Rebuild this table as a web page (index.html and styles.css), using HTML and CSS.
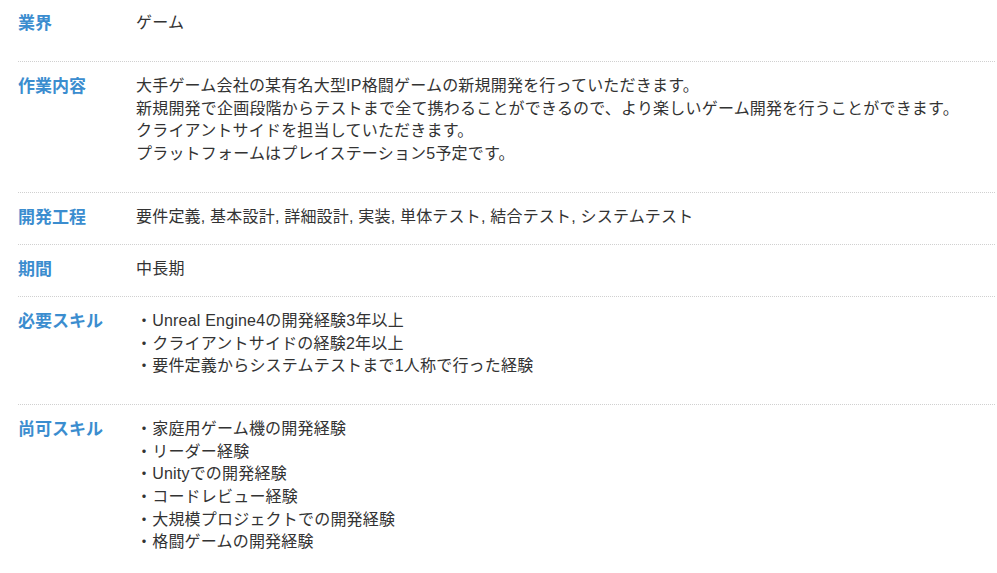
FILE: index.html
```html
<!DOCTYPE html>
<html lang="ja">
<head>
    <meta charset="UTF-8">
    <meta name="viewport" content="width=device-width, initial-scale=1.0">
    <title>案件詳細</title>
    <link rel="stylesheet" href="styles.css">
</head>
<body>
    <div class="detail">
        <div class="row row-first row-loose">
            <div class="label">業界</div>
            <div class="value">ゲーム</div>
        </div>

        <div class="row row-loose">
            <div class="label">作業内容</div>
            <div class="value">
                大手ゲーム会社の某有名大型IP格闘ゲームの新規開発を行っていただきます。<br>
                新規開発で企画段階からテストまで全て携わることができるので、より楽しいゲーム開発を行うことができます。<br>
                クライアントサイドを担当していただきます。<br>
                プラットフォームはプレイステーション5予定です。
            </div>
        </div>

        <div class="row">
            <div class="label">開発工程</div>
            <div class="value">要件定義, 基本設計, 詳細設計, 実装, 単体テスト, 結合テスト, システムテスト</div>
        </div>

        <div class="row">
            <div class="label">期間</div>
            <div class="value">中長期</div>
        </div>

        <div class="row row-loose">
            <div class="label">必要スキル</div>
            <div class="value">
                ・Unreal Engine4の開発経験3年以上<br>
                ・クライアントサイドの経験2年以上<br>
                ・要件定義からシステムテストまで1人称で行った経験
            </div>
        </div>

        <div class="row row-loose">
            <div class="label">尚可スキル</div>
            <div class="value">
                ・家庭用ゲーム機の開発経験<br>
                ・リーダー経験<br>
                ・Unityでの開発経験<br>
                ・コードレビュー経験<br>
                ・大規模プロジェクトでの開発経験<br>
                ・格闘ゲームの開発経験
            </div>
        </div>
    </div>
</body>
</html>
```

FILE: styles.css
```css
body {
    margin: 0;
    background-color: #fff;
    font-family: "Liberation Sans", "Noto Sans CJK JP", sans-serif;
    color: #333;
}
.detail {
    padding: 0 2px 0 18px;
}
.row {
    display: flex;
    padding: 13px 0 15px;
    border-top: 1px dotted #d0d0d0;
}
.row-first {
    border-top: none;
    padding-top: 12px;
}
.row-loose {
    padding-bottom: 26px;
}
.label {
    width: 118px;
    flex-shrink: 0;
    font-size: 17px;
    line-height: 23px;
    font-weight: bold;
    color: #3b8dcf;
}
.value {
    font-size: 16px;
    line-height: 22.7px;
    letter-spacing: 0.2px;
}
```
